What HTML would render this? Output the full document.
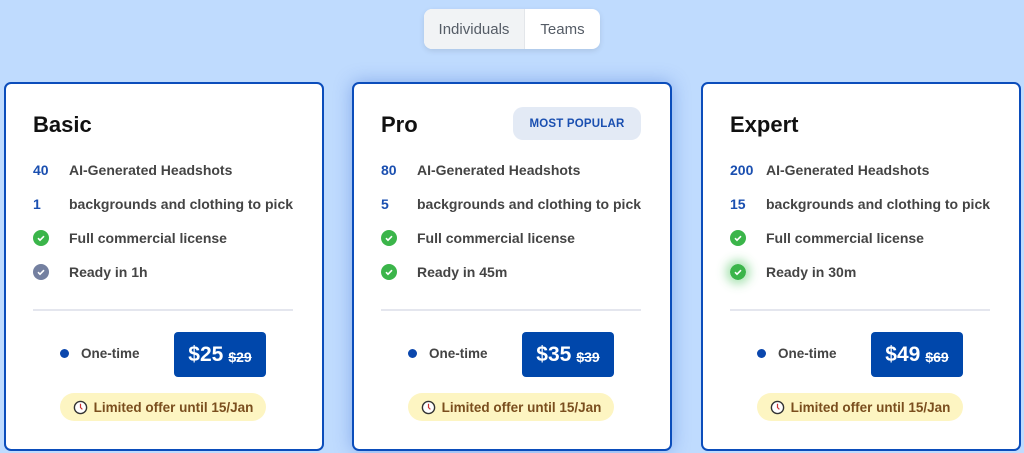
<!DOCTYPE html>
<html><head><meta charset="utf-8"><style>
*{box-sizing:border-box;margin:0;padding:0}
body{width:1024px;height:453px;background:#bfdbfe;font-family:"Liberation Sans",sans-serif;position:relative;overflow:hidden}
.tog{position:absolute;left:424px;top:9px;width:176px;height:40px;border-radius:8px;background:#fff;box-shadow:0 2px 6px rgba(0,0,0,.1);overflow:hidden;display:flex;font-size:15px;color:#555c66}
.tog div{display:flex;align-items:center;justify-content:center}
.tog .a{width:101px;background:#f1f3f5;border-right:1px solid #e3e6ea}
.tog .b{flex:1}
.card{position:absolute;top:82px;width:320px;height:369px;background:#fff;border:2px solid #0b4dbb;border-radius:7px}
.card.pro{box-shadow:0 0 18px rgba(30,80,200,.35)}
h2{position:absolute;left:27px;top:28px;font-size:22px;font-weight:bold;color:#111}
.badge{position:absolute;left:159px;top:23px;width:128px;height:33px;background:#e3eaf5;border-radius:10px;color:#1a4fb0;font-size:11.5px;font-weight:bold;display:flex;align-items:center;justify-content:center;letter-spacing:.2px}
.row{position:absolute;left:27px;height:20px;display:flex;align-items:center;font-size:14px;color:#444;font-weight:bold}
.row .n{width:36px;color:#1a4fb0}
.row svg{margin-right:20px}
.div{position:absolute;left:27px;top:225px;width:260px;height:2px;background:#e4e6ee}
.ot{position:absolute;left:54px;top:262px;display:flex;align-items:center;font-size:13.5px;font-weight:bold;color:#444}
.ot i{width:9px;height:9px;border-radius:50%;background:#0b47ad;margin-right:12px}
.price{position:absolute;left:168px;top:248px;width:92px;height:45px;background:#0047ab;border-radius:4px;color:#fff;display:flex;align-items:center;justify-content:center;font-weight:bold;font-size:21px}
.price s{font-size:14px;margin-left:5px;margin-top:4px}
.offer{position:absolute;left:54px;top:309px;width:206px;height:28px;background:#fdf5c2;border-radius:14px;display:flex;align-items:center;justify-content:center;font-size:13.5px;font-weight:bold;color:#7a4e1e}
.offer svg{margin-right:6px}
</style></head><body>
<div class="tog"><div class="a">Individuals</div><div class="b">Teams</div></div>

<div class="card" style="left:4px">
<h2>Basic</h2>
<div class="row" style="top:76px"><span class="n">40</span>AI-Generated Headshots</div>
<div class="row" style="top:110px"><span class="n">1</span>backgrounds and clothing to pick</div>
<div class="row" style="top:144px"><svg width="16" height="16" viewBox="0 0 16 16"><circle cx="8" cy="8" r="8" fill="#3bb54a"/><path d="M5 8.2l2 2 4-4" stroke="#fff" stroke-width="1.6" fill="none"/></svg>Full commercial license</div>
<div class="row" style="top:178px"><svg width="16" height="16" viewBox="0 0 16 16"><circle cx="8" cy="8" r="8" fill="#7480a0"/><path d="M5 8.2l2 2 4-4" stroke="#fff" stroke-width="1.6" fill="none"/></svg>Ready in 1h</div>
<div class="div"></div>
<div class="ot"><i></i>One-time</div>
<div class="price">$25<s>$29</s></div>
<div class="offer"><svg width="15" height="15" viewBox="0 0 16 16"><circle cx="8" cy="8" r="6.5" fill="#fff" stroke="#333" stroke-width="1.5"/><path d="M8 4v4l2 2" stroke="#c33" stroke-width="1.3" fill="none"/></svg>Limited offer until 15/Jan</div>
</div>

<div class="card pro" style="left:352px">
<h2>Pro</h2>
<div class="badge">MOST POPULAR</div>
<div class="row" style="top:76px"><span class="n">80</span>AI-Generated Headshots</div>
<div class="row" style="top:110px"><span class="n">5</span>backgrounds and clothing to pick</div>
<div class="row" style="top:144px"><svg width="16" height="16" viewBox="0 0 16 16"><circle cx="8" cy="8" r="8" fill="#3bb54a"/><path d="M5 8.2l2 2 4-4" stroke="#fff" stroke-width="1.6" fill="none"/></svg>Full commercial license</div>
<div class="row" style="top:178px"><svg width="16" height="16" viewBox="0 0 16 16"><circle cx="8" cy="8" r="8" fill="#3bb54a"/><path d="M5 8.2l2 2 4-4" stroke="#fff" stroke-width="1.6" fill="none"/></svg>Ready in 45m</div>
<div class="div"></div>
<div class="ot"><i></i>One-time</div>
<div class="price">$35<s>$39</s></div>
<div class="offer"><svg width="15" height="15" viewBox="0 0 16 16"><circle cx="8" cy="8" r="6.5" fill="#fff" stroke="#333" stroke-width="1.5"/><path d="M8 4v4l2 2" stroke="#c33" stroke-width="1.3" fill="none"/></svg>Limited offer until 15/Jan</div>
</div>

<div class="card" style="left:701px">
<h2>Expert</h2>
<div class="row" style="top:76px"><span class="n">200</span>AI-Generated Headshots</div>
<div class="row" style="top:110px"><span class="n">15</span>backgrounds and clothing to pick</div>
<div class="row" style="top:144px"><svg width="16" height="16" viewBox="0 0 16 16"><circle cx="8" cy="8" r="8" fill="#3bb54a"/><path d="M5 8.2l2 2 4-4" stroke="#fff" stroke-width="1.6" fill="none"/></svg>Full commercial license</div>
<div class="row" style="top:178px"><svg width="16" height="16" viewBox="0 0 16 16" style="border-radius:50%;box-shadow:0 0 10px 4px rgba(60,190,80,.45)"><circle cx="8" cy="8" r="8" fill="#3bb54a"/><path d="M5 8.2l2 2 4-4" stroke="#fff" stroke-width="1.6" fill="none"/></svg>Ready in 30m</div>
<div class="div"></div>
<div class="ot"><i></i>One-time</div>
<div class="price">$49<s>$69</s></div>
<div class="offer"><svg width="15" height="15" viewBox="0 0 16 16"><circle cx="8" cy="8" r="6.5" fill="#fff" stroke="#333" stroke-width="1.5"/><path d="M8 4v4l2 2" stroke="#c33" stroke-width="1.3" fill="none"/></svg>Limited offer until 15/Jan</div>
</div>
</body></html>
